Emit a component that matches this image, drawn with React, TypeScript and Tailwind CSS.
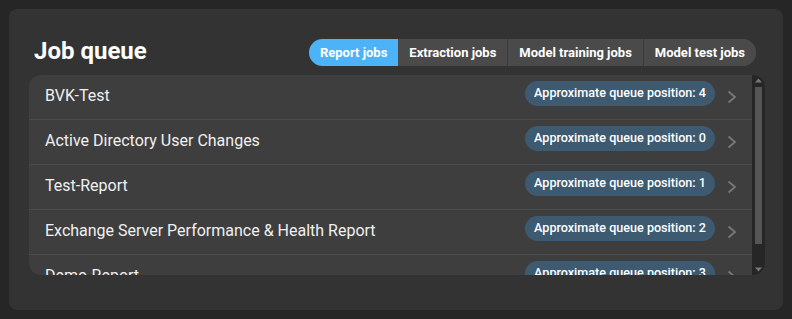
import React from "react";

const rows = [
  { name: "BVK-Test", pos: 4 },
  { name: "Active Directory User Changes", pos: 0 },
  { name: "Test-Report", pos: 1 },
  { name: "Exchange Server Performance & Health Report", pos: 2 },
  { name: "Demo-Report", pos: 3 },
];

const tabs = [
  { label: "Report jobs", active: true },
  { label: "Extraction jobs", active: false },
  { label: "Model training jobs", active: false },
  { label: "Model test jobs", active: false },
];

function Chevron() {
  return (
    <svg width="10" height="14" viewBox="0 0 10 14" className="shrink-0">
      <polyline points="1.5,1.5 8,7 1.5,12.5" fill="none" stroke="#787878" strokeWidth="1.8" />
    </svg>
  );
}

export default function App() {
  return (
    <div
      className="w-[792px] h-[319px] bg-[#262626] p-[9px]"
      style={{ fontFamily: "Roboto, 'Noto Sans', sans-serif" }}
    >
      <div className="w-[774px] h-[301px] rounded-[8px] bg-[#333333] pl-[20px] pr-[18px] pt-[30px]">
        <div className="flex items-center justify-between h-[27px]">
          <h1 className="ml-[5px] text-[24px] leading-[27px] font-bold text-white -mt-[2px]">Job queue</h1>
          <div className="flex h-[27px] mr-[9px] rounded-full overflow-hidden bg-[#4a4a4a]">
            {tabs.map((t, i) => (
              <div
                key={t.label}
                className={
                  "flex items-center px-[11px] text-[13px] font-bold text-white " +
                  (t.active ? "bg-[#4db3f8]" : "bg-[#4a4a4a]") +
                  (i > 1 ? " border-l border-[#393939]" : "")
                }
              >
                {t.label}
              </div>
            ))}
          </div>
        </div>
        <div className="mt-[9px] h-[200px] rounded-[12px] bg-[#3e3e3e] overflow-hidden flex">
          <div className="flex-1 overflow-hidden">
            {rows.map((r) => (
              <div
                key={r.name}
                className="h-[45px] shrink-0 flex items-center border-b border-[#4c4c4c] pl-[16px] pr-[15px]"
              >
                <span className="flex-1 text-[16px] text-[#f0f0f0] -mt-[2px]">{r.name}</span>
                <span className="h-[25px] mb-[7px] px-[9px] rounded-full bg-[#3d5a70] text-white text-[12.6px] font-medium flex items-center">
                  Approximate queue position: {r.pos}
                </span>
                <span className="ml-[12px]">
                  <Chevron />
                </span>
              </div>
            ))}
          </div>
          <div className="w-[13px] bg-[#262626] flex flex-col items-center pt-[3px] pb-[3px]">
            <svg width="7" height="5" viewBox="0 0 7 5">
              <polygon points="3.5,0.5 7,4.5 0,4.5" fill="#777" />
            </svg>
            <div className="w-[7px] h-[157px] mt-[4px] bg-[#555555]" />
            <div className="flex-1" />
            <svg width="7" height="5" viewBox="0 0 7 5">
              <polygon points="0,0.5 7,0.5 3.5,4.5" fill="#777" />
            </svg>
          </div>
        </div>
      </div>
    </div>
  );
}
